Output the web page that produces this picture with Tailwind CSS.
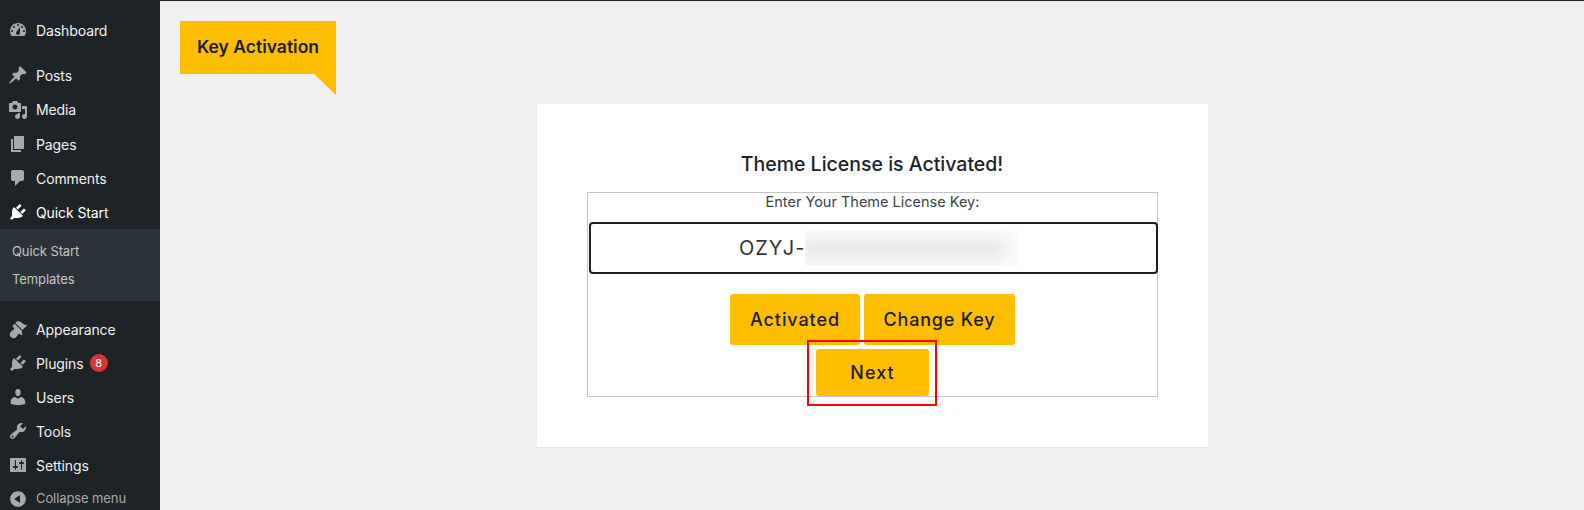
<!DOCTYPE html>
<html lang="en">

<head>
    <meta charset="UTF-8" />
    <meta name="viewport" content="width=device-width, initial-scale=1.0" />
    <title>Key Activation</title>
    <script src="https://cdn.jsdelivr.net/npm/@tailwindcss/browser@4"></script>
</head>

<body class="bg-[#f0f0f0] font-['Inter',sans-serif]">

    <div class="flex h-[510px] overflow-hidden border-t border-[#1d2327]">
        <!-- sidebar -->
        <aside class="w-[160px] shrink-0 bg-[#1d2327] text-[14px] tracking-[-0.1px] text-[#f0f0f1] pt-[12px]">
            <div class="flex items-center h-[34px]">
                <svg class="w-[20px] h-[20px] ml-[8px] mr-[8px] fill-[#a7aaad]" viewBox="0 0 20 20"><path fill-rule="evenodd" d="M3.76 16h12.48c1.1-1.37 1.76-3.11 1.76-5 0-4.42-3.58-8-8-8s-8 3.58-8 8c0 1.89.66 3.63 1.76 5zM10 4c.55 0 1 .45 1 1s-.45 1-1 1-1-.45-1-1 .45-1 1-1zM6 6c.55 0 1 .45 1 1s-.45 1-1 1-1-.45-1-1 .45-1 1-1zm8 0c.55 0 1 .45 1 1s-.45 1-1 1-1-.45-1-1 .45-1 1-1zm-5.37 5.55L12 7v6c0 1.1-.9 2-2 2s-2-.9-2-2c0-.57.24-1.08.63-1.45zM4 10c.55 0 1 .45 1 1s-.45 1-1 1-1-.45-1-1 .45-1 1-1zm12 0c.55 0 1 .45 1 1s-.45 1-1 1-1-.45-1-1 .45-1 1-1z"/></svg>
                <span>Dashboard</span>
            </div>

            <div class="h-[11px]"></div>

            <div class="flex items-center h-[34px]">
                <svg class="w-[20px] h-[20px] ml-[8px] mr-[8px] fill-[#a7aaad]" viewBox="0 0 20 20"><path d="M10.44 3.02l1.82-1.82 6.36 6.35-1.83 1.82c-1.05-.68-2.48-.57-3.41.36l-.75.75c-.92.93-1.04 2.35-.35 3.41l-1.83 1.82-2.41-2.41-2.8 2.79c-.42.42-3.38 2.71-3.8 2.29s1.86-3.39 2.28-3.81l2.79-2.79L4.1 9.36l1.83-1.82c1.05.69 2.48.57 3.4-.36l.75-.75c.93-.92 1.05-2.35.36-3.41z"/></svg>
                <span>Posts</span>
            </div>
            <div class="flex items-center h-[35px]">
                <svg class="w-[20px] h-[20px] ml-[8px] mr-[8px] fill-[#a7aaad]" viewBox="0 0 20 20"><path fill-rule="evenodd" d="M13 11V4c0-.55-.45-1-1-1h-1.67L9 1H5L3.67 3H2c-.55 0-1 .45-1 1v7c0 .55.45 1 1 1h10c.55 0 1-.45 1-1zM7 4.5c1.38 0 2.5 1.12 2.5 2.5S8.38 9.5 7 9.5 4.5 8.38 4.5 7 5.62 4.5 7 4.5zM14 6h5v10.5c0 1.38-1.12 2.5-2.5 2.5S14 17.88 14 16.5s1.12-2.5 2.5-2.5c.17 0 .34.02.5.05V9h-3V6zm-4 8.05V13h2v3.5c0 1.38-1.12 2.5-2.5 2.5S7 17.88 7 16.5 8.12 14 9.5 14c.17 0 .34.02.5.05z"/></svg>
                <span>Media</span>
            </div>
            <div class="flex items-center h-[34px]">
                <svg class="w-[20px] h-[20px] ml-[8px] mr-[8px] fill-[#a7aaad]" viewBox="0 0 20 20"><path d="M6 15V2h10v13H6zm-1 1h8v2H3V5h2v11z"/></svg>
                <span>Pages</span>
            </div>
            <div class="flex items-center h-[34px]">
                <svg class="w-[20px] h-[20px] ml-[8px] mr-[8px] fill-[#a7aaad]" viewBox="0 0 20 20"><path d="M5 2h9c1.1 0 2 .9 2 2v7c0 1.1-.9 2-2 2h-2l-5 5v-5H5c-1.1 0-2-.9-2-2V4c0-1.1.9-2 2-2z"/></svg>
                <span>Comments</span>
            </div>
            <div class="flex items-center h-[34px]">
                <svg class="w-[20px] h-[20px] ml-[8px] mr-[8px] fill-white" viewBox="0 0 20 20"><path d="M13.11 4.36L9.87 7.6 8 5.73l3.24-3.24c.35-.34 1.05-.2 1.56.32.52.51.66 1.21.31 1.55zm-8 1.77l.91-1.12 9.01 9.01-1.19.84c-.71.71-2.63 1.16-3.82 1.16H6.14L4.9 17.26c-.59.59-1.54.59-2.12 0-.59-.58-.59-1.53 0-2.12l1.24-1.24v-3.88c0-1.13.4-3.19 1.09-3.89zm7.26 3.97l3.24-3.24c.34-.35 1.04-.21 1.55.31.52.51.66 1.21.31 1.55l-3.24 3.25z"/></svg>
                <span class="text-white">Quick Start</span>
            </div>

            <div class="bg-[#2c3338] h-[72px] pt-[8px] pl-[12px] text-[13px] text-[#c3c4c7]">
                <div class="h-[28px] leading-[28px]">Quick Start</div>
                <div class="h-[28px] leading-[28px]">Templates</div>
            </div>

            <div class="h-[11px]"></div>

            <div class="flex items-center h-[34px]">
                <svg class="w-[20px] h-[20px] ml-[8px] mr-[8px] fill-[#a7aaad]" viewBox="0 0 20 20"><path d="M14.48 11.06L7.41 3.99l1.5-1.5c.5-.56 2.3-.47 3.51.32 1.21.8 1.43 1.28 2.91 2.1 1.18.64 2.45 1.26 4.45.85zm-.71.71L6.7 4.7 4.93 6.47c-.39.39-.39 1.02 0 1.41l1.06 1.06c.39.39.39 1.03 0 1.42-.6.6-1.43 1.11-2.21 1.69-.35.26-.7.53-1.01.84-1.43 1.43-1.4 3.75.05 5.2 1.45 1.45 3.77 1.48 5.2.05.31-.31.58-.66.84-1.01.58-.78 1.09-1.61 1.69-2.21.39-.39 1.03-.39 1.42 0l1.06 1.06c.39.39 1.02.39 1.41 0z"/></svg>
                <span>Appearance</span>
            </div>
            <div class="flex items-center h-[34px]">
                <svg class="w-[20px] h-[20px] ml-[8px] mr-[8px] fill-[#a7aaad]" viewBox="0 0 20 20"><path d="M13.11 4.36L9.87 7.6 8 5.73l3.24-3.24c.35-.34 1.05-.2 1.56.32.52.51.66 1.21.31 1.55zm-8 1.77l.91-1.12 9.01 9.01-1.19.84c-.71.71-2.63 1.16-3.82 1.16H6.14L4.9 17.26c-.59.59-1.54.59-2.12 0-.59-.58-.59-1.53 0-2.12l1.24-1.24v-3.88c0-1.13.4-3.19 1.09-3.89zm7.26 3.97l3.24-3.24c.34-.35 1.04-.21 1.55.31.52.51.66 1.21.31 1.55l-3.24 3.25z"/></svg>
                <span>Plugins</span>
                <span class="ml-[6px] w-[18px] h-[18px] rounded-full bg-[#d63638] text-white text-[11px] leading-[18px] text-center">8</span>
            </div>
            <div class="flex items-center h-[34px]">
                <svg class="w-[20px] h-[20px] ml-[8px] mr-[8px] fill-[#a7aaad]" viewBox="0 0 20 20"><path d="M10 9.25c-2.27 0-2.73-3.44-2.73-3.44C7 4.02 7.82 2 9.97 2c2.16 0 2.98 2.02 2.71 3.81 0 0-.41 3.44-2.68 3.44zm0 2.57L12.72 10c2.39 0 4.52 2.33 4.52 4.53v2.49s-3.65 1.13-7.24 1.13c-3.65 0-7.24-1.13-7.24-1.13v-2.49c0-2.25 1.94-4.48 4.47-4.48z"/></svg>
                <span>Users</span>
            </div>
            <div class="flex items-center h-[34px]">
                <svg class="w-[20px] h-[20px] ml-[8px] mr-[8px] fill-[#a7aaad]" viewBox="0 0 20 20"><path fill-rule="evenodd" d="M16.68 9.77c-1.34 1.34-3.3 1.67-4.95.99l-5.41 6.52c-.99.99-2.59.99-3.58 0s-.99-2.59 0-3.57l6.52-5.42c-.68-1.65-.35-3.61.99-4.95 1.28-1.28 3.12-1.62 4.72-1.06l-2.89 2.89 2.82 2.82 2.86-2.87c.53 1.58.18 3.39-1.08 4.65zM3.81 16.21c.4.39 1.04.39 1.43 0 .4-.4.4-1.04 0-1.43-.39-.4-1.03-.4-1.43 0-.39.39-.39 1.03 0 1.43z"/></svg>
                <span>Tools</span>
            </div>
            <div class="flex items-center h-[34px]">
                <svg class="w-[20px] h-[20px] ml-[8px] mr-[8px] fill-[#a7aaad]" viewBox="0 0 20 20"><path fill-rule="evenodd" d="M18 16V4c0-.55-.45-1-1-1H3c-.55 0-1 .45-1 1v12c0 .55.45 1 1 1h14c.55 0 1-.45 1-1zM8 11h1c.55 0 1 .45 1 1s-.45 1-1 1H8v1.5c0 .28-.22.5-.5.5s-.5-.22-.5-.5V13H6c-.55 0-1-.45-1-1s.45-1 1-1h1V5.5c0-.28.22-.5.5-.5s.5.22.5.5V11zm5-2h-1c-.55 0-1-.45-1-1s.45-1 1-1h1V5.5c0-.28.22-.5.5-.5s.5.22.5.5V7h1c.55 0 1 .45 1 1s-.45 1-1 1h-1v5.5c0 .28-.22.5-.5.5s-.5-.22-.5-.5V9z"/></svg>
                <span>Settings</span>
            </div>
            <div class="flex items-center h-[34px] text-[13px] text-[#a7aaad]">
                <svg class="w-[20px] h-[20px] ml-[8px] mr-[8px] fill-[#a7aaad]" viewBox="0 0 20 20"><path fill-rule="evenodd" d="M10 2.16c4.33 0 7.84 3.51 7.84 7.84s-3.51 7.84-7.84 7.84S2.16 14.33 2.16 10 5.67 2.16 10 2.16zm2 11.72V6.12L6.18 9.97z"/></svg>
                <span>Collapse menu</span>
            </div>
        </aside>

        <!-- content -->
        <main class="flex-1">
            <div class="ml-[20px] mt-[20px] w-[156px] h-[74px] bg-[#fdbe00] [clip-path:polygon(0_0,156px_0,156px_74px,134px_53px,0_53px)]">
                <div class="h-[53px] flex items-center justify-center text-[17.5px] font-semibold text-[#1d1d1d]">Key Activation</div>
            </div>

            <div class="ml-[377px] mt-[9px] w-[671px] h-[343px] bg-white shadow-[0_1px_1px_rgba(0,0,0,0.04)] pt-[40px] pl-[50px]">
                <h2 class="w-[570px] h-[48px] text-center text-[19.5px] leading-[40px] font-medium text-[#1d2327]">Theme License is Activated!</h2>

                <div class="w-[571px] h-[205px] border border-[#c3c4c7] flex flex-col items-center">
                    <label class="h-[18px] leading-[18px] text-[14.5px] text-[#3c434a]">Enter Your Theme License Key:</label>

                    <div class="self-start ml-[1px] mt-[11px] w-[569px] h-[52px] shrink-0 bg-white border-2 border-[#1f1f1f] rounded-[4px] flex items-center pl-[148px]">
                        <span class="w-[66px] text-[20px] tracking-[1px] text-[#2c3338]">OZYJ-</span>
                        <div class="w-[213px] h-[35px] overflow-hidden bg-[#fafafa]">
                            <div class="w-[205px] h-[18px] mt-[9px] -ml-[4px] rounded-full bg-[#e6e6e6] blur-[7px]"></div>
                        </div>
                    </div>

                    <div class="flex gap-[4px] mt-[20px]">
                        <button class="w-[130px] h-[51px] rounded-[3px] bg-[#fdbe00] text-[18px] font-medium tracking-[0.9px] text-[#1d1d1d]">Activated</button>
                        <button class="w-[151px] h-[51px] rounded-[3px] bg-[#fdbe00] text-[18px] font-medium tracking-[0.8px] text-[#1d1d1d]">Change Key</button>
                    </div>

                    <div class="relative mt-[4px]">
                        <button class="block w-[113px] h-[47px] rounded-[3px] bg-[#fdbe00] text-[18px] font-medium tracking-[1px] text-[#1d1d1d]">Next</button>
                        <div class="absolute -left-[9px] -top-[9px] -right-[8px] -bottom-[10px] border-2 border-[#ff0000]"></div>
                    </div>
                </div>
            </div>
        </main>
    </div>

</body>

</html>
